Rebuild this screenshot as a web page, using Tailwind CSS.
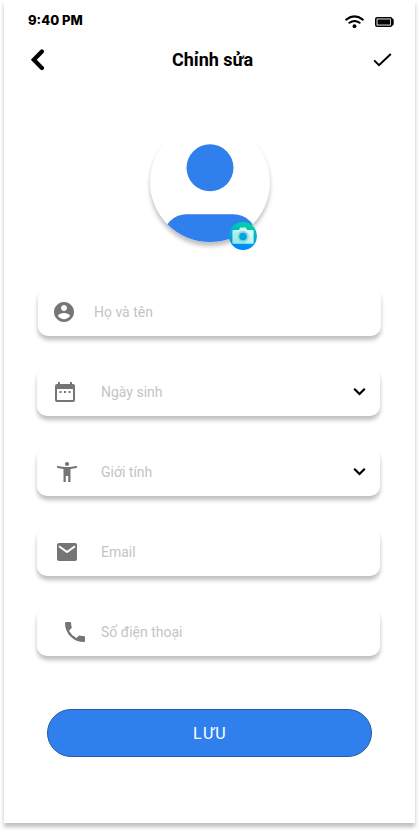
<!DOCTYPE html>
<html lang="vi">
<head>
<meta charset="utf-8">
<title>Chỉnh sửa</title>
<script src="https://cdn.jsdelivr.net/npm/@tailwindcss/browser@4"></script>
</head>
<body class="h-[831px] bg-white font-['Roboto',sans-serif] overflow-hidden">
<main class="mx-1 h-[823px] w-[411px] bg-white shadow-[0_4px_4px_rgba(0,0,0,0.25)] flex flex-col">
  <div class="flex h-10 shrink-0 items-center justify-between pl-6 pr-[21px]">
    <span class="font-['Inter',sans-serif] text-[13px] font-extrabold leading-5 w-[56px] whitespace-nowrap">9:40 PM</span>
    <div class="flex items-center gap-[11px] pt-[3px]">
      <svg class="h-[14px] w-[19px]" viewBox="0 0 19 14" fill="none" stroke="#000" stroke-width="2" stroke-linecap="round"><path d="M1.2 4.600Q9.500-1.800 17.800 4.600M4.400 7.800Q9.500 4 14.600 7.800"/><circle cx="9.5" cy="11.2" r="1.9" fill="#000" stroke="none"/></svg>
      <svg class="h-[10px] w-[19px]" viewBox="0 0 19 10"><rect x=".8" y=".8" width="15.8" height="8.4" rx="1.3" fill="none" stroke="#000" stroke-width="1.6"/><path d="M16.500 1.200q2.200.2 2.200 1.800v4q0 1.600-2.200 1.800z"/><rect x="2.5" y="2.4" width="12.5" height="5.2"/></svg>
    </div>
  </div>
  <header class="flex h-10 shrink-0 items-center justify-between pl-[26px] pr-[23px]">
    <svg class="h-[22px] w-[15px]" viewBox="0 0 15 22" fill="none" stroke="#000" stroke-width="4.2" stroke-linecap="round" stroke-linejoin="miter"><path d="M11.900 2.500 3.800 10.800 11.900 19"/></svg>
    <h1 class="ml-[7px] text-lg font-bold leading-6 tracking-[-0.02px]">Chỉnh sửa</h1>
    <svg class="h-[14px] w-[19px]" viewBox="0 0 19 14" fill="none" stroke="#000" stroke-width="2"><path d="M1.200 7.400 6 12.200 17.800 1"/></svg>
  </header>
  <div class="relative mt-[42px] ml-[146px] size-[120px] shrink-0 rounded-full shadow-[0_4px_4px_rgba(0,0,0,0.25)]">
    <svg class="size-[120px]" viewBox="0 0 120 120"><defs><clipPath id="c"><circle cx="60" cy="60" r="60"/></clipPath></defs><g fill="#2f80ed" clip-path="url(#c)"><circle cx="60" cy="45.800" r="23.500"/><rect x="13" y="92.300" width="94" height="47" rx="23.500"/></g></svg>
    <svg class="absolute left-[79px] top-[100px] size-7" viewBox="0 0 28 28"><defs><linearGradient id="g" x1="0.65" y1="0" x2="0.4" y2="1"><stop offset="0.1" stop-color="#00d0a5"/><stop offset="0.9" stop-color="#0088ff"/></linearGradient><linearGradient id="h" x1="1" y1="0" x2="0" y2="1"><stop offset="0" stop-color="#f0fffc"/><stop offset="1" stop-color="#8ce6da"/></linearGradient></defs><circle cx="14" cy="14" r="14" fill="url(#g)"/><path d="M4.300 8h5.400l1.700-2.500h5.200L18.300 8h5.400q.9 0 .9.900v12q0 .9-.9.900H4.300q-.9 0-.9-.9v-12q0-.9.900-.9z" fill="url(#h)"/><circle cx="14" cy="14.600" r="5.800" fill="#84dfe0"/><circle cx="14" cy="14.600" r="3.800" fill="#00a2e4"/></svg>
  </div>
  <form class="mt-[46px] ml-[33px] flex w-[343px] shrink-0 flex-col gap-8 text-sm leading-5 text-[#c4c4c4]">
    <label class="ml-px flex h-12 w-[343px] items-center rounded-[10px] bg-white pl-[14px] shadow-[0_4px_4px_rgba(0,0,0,0.25)]">
      <svg class="size-6" viewBox="0 0 24 24" fill="#757575"><path d="M12 2C6.480 2 2 6.480 2 12s4.480 10 10 10 10-4.480 10-10S17.520 2 12 2zm0 3c1.660 0 3 1.340 3 3s-1.340 3-3 3-3-1.340-3-3 1.340-3 3-3zm0 14.200c-2.500 0-4.710-1.280-6-3.220.03-1.990 4-3.080 6-3.080 1.990 0 5.970 1.090 6 3.080-1.290 1.940-3.500 3.220-6 3.220z"/></svg>
      <span class="ml-[18px]">Họ và tên</span>
    </label>
    <label class="flex h-12 items-center rounded-[10px] bg-white pl-4 pr-[14px] shadow-[0_4px_4px_rgba(0,0,0,0.25)]">
      <svg class="size-6" viewBox="0 0 24 24" fill="#757575"><path d="M4 4h1V2h2v2h10V2h2v2h1q2 0 2 2v14q0 2-2 2H4q-2 0-2-2V6q0-2 2-2zm0 5v11h16V9z" fill-rule="evenodd"/><path d="M6.500 11h2v2h-2zm4.500 0h2v2h-2zm4.500 0h2v2h-2z"/></svg>
      <span class="ml-6">Ngày sinh</span>
      <svg class="ml-auto h-3 w-[13px]" viewBox="0 0 13 12" fill="none" stroke="#000" stroke-width="2.2"><path d="M1.200 2.700 6.500 8 11.800 2.700"/></svg>
    </label>
    <label class="flex h-12 items-center rounded-[10px] bg-white pl-[18px] pr-[14px] shadow-[0_4px_4px_rgba(0,0,0,0.25)]">
      <svg class="size-6" viewBox="0 0 24 24" fill="#757575"><path d="M20.500 6c-2.610.7-5.670 1-8.500 1s-5.890-.3-8.500-1L2 6.100V7.700C4 8.300 6.500 8.800 8.500 9v13h2.300v-6h2.400v6h2.300V9c2-.2 4.500-.7 6.500-1.300V6.100z"/><circle cx="12" cy="4" r="2.100"/></svg>
      <span class="ml-[22px]">Giới tính</span>
      <svg class="ml-auto h-3 w-[13px]" viewBox="0 0 13 12" fill="none" stroke="#000" stroke-width="2.2"><path d="M1.200 2.700 6.500 8 11.800 2.700"/></svg>
    </label>
    <label class="flex h-12 items-center rounded-[10px] bg-white pl-[18px] shadow-[0_4px_4px_rgba(0,0,0,0.25)]">
      <svg class="size-6" viewBox="0 0 24 24"><rect x="2" y="3" width="20" height="18" rx="2" fill="#757575"/><path d="M4 6.200 12 12l8-5.800" fill="none" stroke="#fff" stroke-width="2"/></svg>
      <span class="ml-[22px]">Email</span>
    </label>
    <label class="flex h-12 items-center rounded-[10px] bg-white pl-[26px] shadow-[0_4px_4px_rgba(0,0,0,0.25)]">
      <svg class="size-6" viewBox="0 0 24 24" fill="#757575"><path d="M3.100 2H7q1.100 0 1.100 1.100 0 2 .6 4 .2.600-.3 1.100L6 10.700q2.600 4.800 7.400 7.400l2.400-2.400q.5-.5 1.100-.3 2 .6 4 .6Q22 16 22 17.100V21q0 1-1.100 1Q13 22 7.500 16.500 2 11 2 3.100 2 2 3.100 2z"/></svg>
      <span class="ml-[14px]">Số điện thoại</span>
    </label>
  </form>
  <button class="ml-[43px] mt-[53px] h-12 w-[325px] shrink-0 rounded-full border border-[#285b9e] bg-[#2f80ed] pt-px pl-px text-base leading-5 font-normal tracking-[1.25px] text-white">LƯU</button>
</main>
</body>
</html>
